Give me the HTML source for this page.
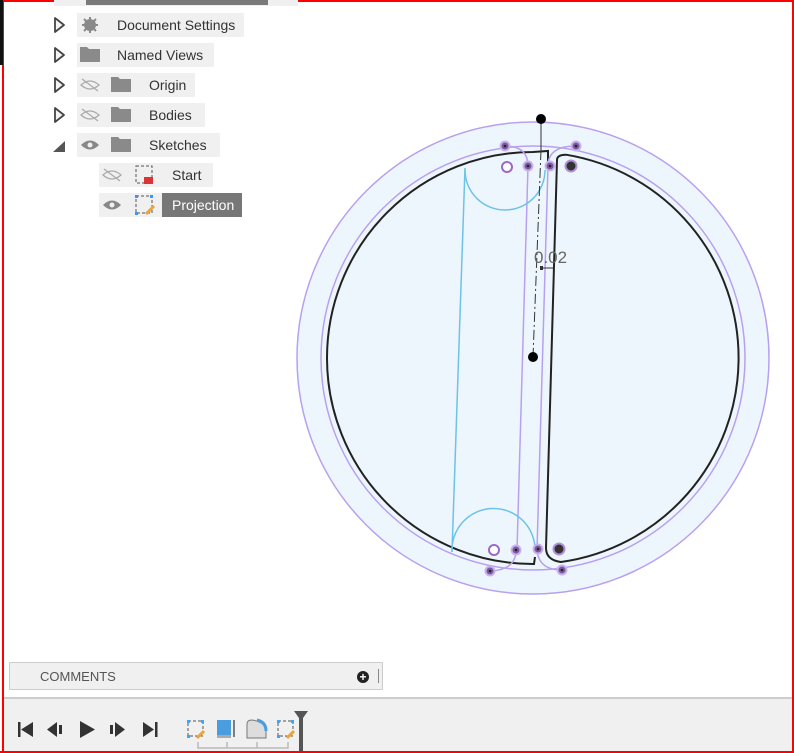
<!DOCTYPE html>
<html><head><meta charset="utf-8"><style>
body{margin:0;width:794px;height:753px;overflow:hidden;background:#fff;font-family:"Liberation Sans",sans-serif;position:relative}
.b{position:absolute}
.item{position:absolute;height:24px;background:#f0f0f0;font-size:14px;color:#333;line-height:24px}
</style></head><body>
<div class="b" style="left:0;top:0;width:794px;height:2px;background:#f00"></div>
<div class="b" style="left:2px;top:0;width:2px;height:753px;background:#f00"></div>
<div class="b" style="left:0;top:0;width:3px;height:65px;background:#111"></div>
<div class="b" style="left:792px;top:0;width:2px;height:753px;background:#f00"></div>
<div class="b" style="left:0;top:751px;width:794px;height:2px;background:#f00"></div>
<div class="b" style="left:54px;top:0;width:244px;height:6px;background:#f0f0f0"></div>
<div class="b" style="left:86px;top:0;width:182px;height:5px;background:#7a7a7a"></div>

<svg class="b" style="left:0;top:0" width="300" height="230">
<g fill="#f4f4f4" stroke="#444" stroke-width="1.8" stroke-linejoin="round">
<path d="M55,18 L64,25 L55,32Z"/><path d="M55,48 L64,55 L55,62Z"/><path d="M55,78 L64,85 L55,92Z"/><path d="M55,108 L64,115 L55,122Z"/>
</g>
<path d="M53,152 L65,141 L65,152Z" fill="#555"/>
</svg>
<div class="item" style="left:77px;top:13px;width:167px"><span style="position:absolute;left:40px">Document Settings</span></div>
<div class="item" style="left:77px;top:43px;width:137px"><span style="position:absolute;left:40px">Named Views</span></div>
<div class="item" style="left:77px;top:73px;width:118px"><span style="position:absolute;left:72px">Origin</span></div>
<div class="item" style="left:77px;top:103px;width:128px"><span style="position:absolute;left:72px">Bodies</span></div>
<div class="item" style="left:77px;top:133px;width:143px"><span style="position:absolute;left:72px">Sketches</span></div>
<div class="item" style="left:99px;top:163px;width:114px"><span style="position:absolute;left:73px">Start</span></div>
<div class="item" style="left:99px;top:193px;width:63px"></div>
<div class="item" style="left:162px;top:193px;width:80px;background:#777;color:#fff"><span style="position:absolute;left:10px">Projection</span></div>
<svg class="b" style="left:0;top:0" width="300" height="230">
<g fill="#8a8a8a">
<circle cx="90" cy="25" r="6"/><circle cx="90" cy="25" r="2.5" fill="#f0f0f0"/>
<path d="M80,47h7l2,2h11v13h-20z"/>
<path d="M111,77h7l2,2h11v13h-20z"/><path d="M111,107h7l2,2h11v13h-20z"/><path d="M111,137h7l2,2h11v13h-20z"/>
</g>
<g stroke="#8a8a8a" stroke-width="2"><path d="M90,17v16M82,25h16M84,19l12,12M96,19l-12,12"/></g>
<g fill="none" stroke="#aaa" stroke-width="1.3">
<path d="M81,85q9,-8 18,0q-9,8 -18,0z M82,79l16,12"/>
<path d="M81,115q9,-8 18,0q-9,8 -18,0z M82,109l16,12"/>
<path d="M103,175q9,-8 18,0q-9,8 -18,0z M104,169l16,12"/>
</g>
<path d="M81,145q9,-9 18,0q-9,9 -18,0z" fill="#888"/><circle cx="90" cy="145" r="2.5" fill="#f0f0f0"/>
<path d="M103,205q9,-9 18,0q-9,9 -18,0z" fill="#888"/><circle cx="112" cy="205" r="2.5" fill="#f0f0f0"/>
<g fill="none" stroke="#555" stroke-dasharray="3,2"><rect x="136" y="166" width="16" height="17"/></g>
<rect x="144" y="177" width="9" height="7" fill="#d33"/>
<g fill="none" stroke="#555" stroke-dasharray="3,2"><rect x="136" y="196" width="16" height="17"/></g>
<g fill="#39f"><rect x="135" y="195" width="3" height="3"/><rect x="150" y="195" width="3" height="3"/><rect x="135" y="212" width="3" height="3"/></g>
<path d="M146,214l8,-8" stroke="#e9a53a" stroke-width="3"/>
</svg>

<svg class="b" style="left:0;top:0" width="794" height="660">
<circle cx="533" cy="358" r="236" fill="#eef6fd" stroke="#b8a0f0" stroke-width="1.5"/>
<circle cx="533" cy="358" r="212" fill="none" stroke="#b8a0f0" stroke-width="1.5"/>
<g fill="none" stroke="#222" stroke-width="2">
<path d="M548,162 L548,151 L533,152 A206,206 0 0 0 533,564 L534,564 L535,557"/>
<path d="M557,160 Q557,154.7 566,154.7 A206,206 0 0 1 561,562 Q546,560 546,548 Z"/>
</g>
<g fill="none" stroke="#b8a0f0" stroke-width="1.5">
<path d="M528,166 L517,550 M548,166 L537,550"/>
<path d="M505,146 Q528,146 528,166 M576,146 Q548,146 548,166"/>
<path d="M490,571 Q516,570 516,550 M562,570 Q538,570 537,549"/>
</g>
<g fill="none" stroke="#6cc3e6" stroke-width="1.5">
<path d="M465,168 L452,552"/>
<path d="M465,170 A40,40 0 0 0 545,170"/>
<path d="M452,552 A41,41 0 0 1 535,548"/>
</g>
<path d="M541,120 L541,150" stroke="#333" stroke-width="1"/>
<path d="M541,150 L533,357" stroke="#333" stroke-width="1" stroke-dasharray="10,3,2,3"/>
<circle cx="541" cy="119" r="5" fill="#000"/><circle cx="533" cy="357" r="5" fill="#000"/>
<path d="M541,268 h12" stroke="#333"/><rect x="540" y="266" width="3" height="4" fill="#333"/>
<text x="534" y="263" font-size="17" fill="#666" font-family="Liberation Sans">0.02</text>
<g fill="#7a5a9a" stroke="#c8b0f0" stroke-width="2">
<circle cx="505" cy="146" r="4.5"/><circle cx="576" cy="146" r="4.5"/>
<circle cx="528" cy="166" r="4.5"/><circle cx="550" cy="166" r="4.5"/>
<circle cx="516" cy="550" r="4.5"/><circle cx="538" cy="549" r="4.5"/>
<circle cx="490" cy="571" r="4.5"/><circle cx="562" cy="570" r="4.5"/>
</g>
<g fill="#222"><circle cx="505" cy="146" r="1.3"/><circle cx="576" cy="146" r="1.3"/><circle cx="528" cy="166" r="1.3"/><circle cx="550" cy="166" r="1.3"/><circle cx="516" cy="550" r="1.3"/><circle cx="538" cy="549" r="1.3"/><circle cx="490" cy="571" r="1.3"/><circle cx="562" cy="570" r="1.3"/></g>
<g fill="#fff" stroke="#9a6ac8" stroke-width="2"><circle cx="507" cy="167" r="5"/><circle cx="494" cy="550" r="5"/></g>
<g fill="#333" stroke="#b090d8" stroke-width="2"><circle cx="571" cy="166" r="5.5"/><circle cx="559" cy="549" r="5.5"/></g>
</svg>

<div class="b" style="left:9px;top:662px;width:374px;height:28px;background:#f0f0f0;border:1px solid #ccc;box-sizing:border-box"></div>
<div class="b" style="left:40px;top:669px;font-size:13px;color:#555">COMMENTS</div>
<div class="b" style="left:357px;top:671px;width:12px;height:12px;border-radius:50%;background:#222;color:#fff;font-size:12px;line-height:12px;text-align:center;font-weight:bold">+</div>
<div class="b" style="left:378px;top:669px;width:1px;height:14px;background:#888"></div>
<div class="b" style="left:4px;top:697px;width:788px;height:54px;background:#f0f0f0;border-top:2px solid #ccc;box-sizing:border-box"></div>
<svg class="b" style="left:0;top:698px" width="320" height="53">
<g fill="#333">
<rect x="18" y="24" width="2.5" height="15"/><path d="M33,24 L21,31.5 L33,39Z"/>
<path d="M47,31.5 L57,24 V39Z"/><rect x="59" y="27" width="3" height="9"/>
<path d="M80,23 L95,31.5 L80,40Z"/>
<rect x="110" y="27" width="3" height="9"/><path d="M115,24 L125,31.5 L115,39Z"/>
<path d="M143,24 L154,31.5 L143,39Z"/><rect x="155" y="24" width="2.5" height="15"/>
</g>
<g fill="none" stroke="#555" stroke-dasharray="3,2"><rect x="188" y="23" width="15" height="15"/><rect x="278" y="23" width="15" height="15"/></g>
<g fill="#3af"><rect x="187" y="22" width="3" height="3"/><rect x="201" y="22" width="3" height="3"/><rect x="187" y="37" width="3" height="3"/><rect x="277" y="22" width="3" height="3"/><rect x="291" y="22" width="3" height="3"/><rect x="277" y="37" width="3" height="3"/></g>
<path d="M197,40l7,-7M287,40l7,-7" stroke="#e9a53a" stroke-width="3"/>
<rect x="217" y="22" width="14" height="15" fill="#4a9ee0"/><rect x="217" y="37" width="14" height="3" fill="#aaa"/>
<path d="M234,22v17" stroke="#333" stroke-width="1.2"/>
<path d="M247,40 V26 Q247,22 252,22 Q266,24 266,34 V40Z" fill="#ddd" stroke="#777"/>
<path d="M257,22 Q266,24 266,33" fill="none" stroke="#4a9ee0" stroke-width="3"/>
<path d="M198,44 v6 h90 v-6 M227,44 v6 M257,44 v6" fill="none" stroke="#bbb" stroke-width="1.5"/>
<path d="M294,13 h14 l-5,7 v33 h-4 v-33z" fill="#555"/>
</svg>
</body></html>
